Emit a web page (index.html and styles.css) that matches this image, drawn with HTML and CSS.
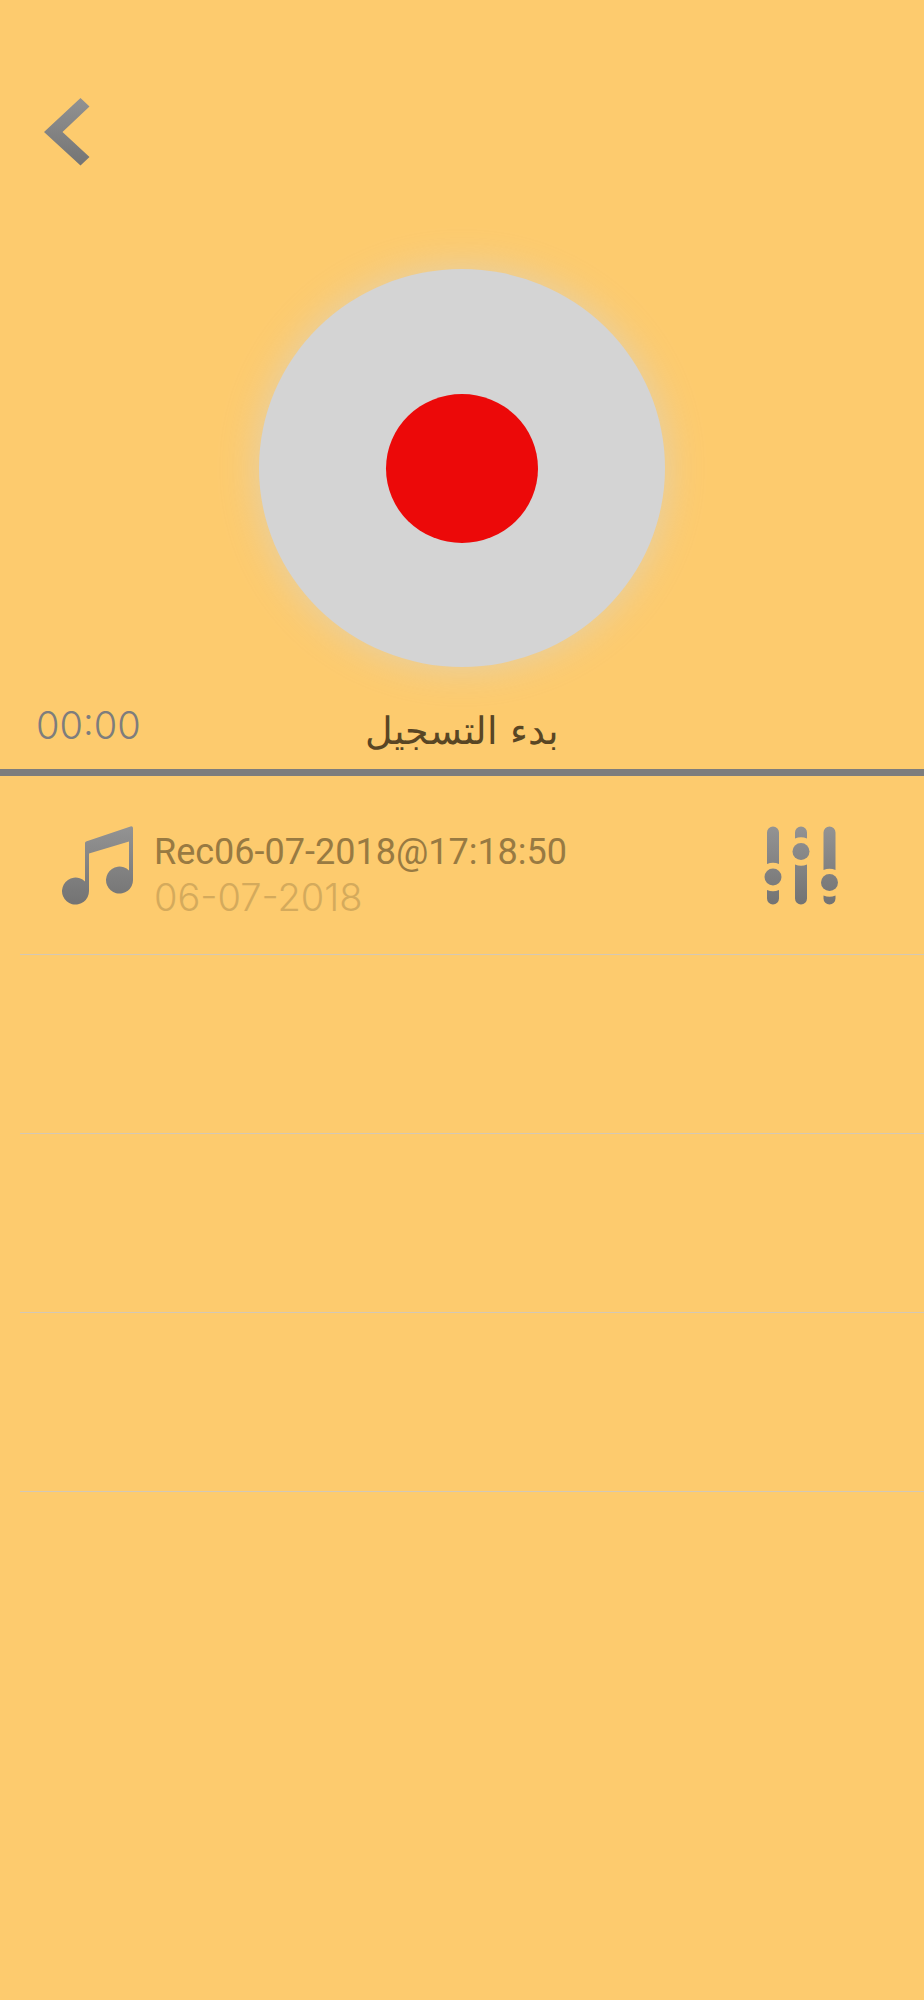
FILE: index.html
```html
<!DOCTYPE html>
<html lang="ar">
<head>
<meta charset="utf-8">
<meta name="viewport" content="width=device-width, initial-scale=1">
<title>بدء التسجيل</title>
<link rel="stylesheet" href="styles.css">
</head>
<body>
<main class="recorder">
  <nav class="nav">
    <button class="icon-button" type="button" aria-label="رجوع">
      <svg class="icon-back" viewBox="0 0 46 68" aria-hidden="true">
        <defs>
          <linearGradient id="steel-back" x1="0" y1="0" x2="0" y2="1">
            <stop offset="0" stop-color="#929292"/>
            <stop offset="1" stop-color="#747474"/>
          </linearGradient>
        </defs>
        <path fill="url(#steel-back)" d="M36.5 0 45.500 8.500 18.500 34 45.500 59 36.500 67.500 0 34Z"/>
      </svg>
    </button>
  </nav>

  <section class="record">
    <button class="record-button" type="button" aria-labelledby="record-label"><span class="record-dot"></span></button>
    <div class="record-status">
      <time class="timer">00:00</time>
      <span class="record-label" id="record-label" dir="rtl">بدء التسجيل</span>
    </div>
  </section>

  <ul class="recordings">
    <li class="recording">
      <svg class="icon-note" viewBox="0 0 71 79" aria-hidden="true">
        <defs>
          <linearGradient id="steel-note" gradientUnits="userSpaceOnUse" x1="0" y1="0" x2="0" y2="79">
            <stop offset="0" stop-color="#939393"/>
            <stop offset="1" stop-color="#737373"/>
          </linearGradient>
        </defs>
        <path fill="url(#steel-note)" d="M24 15.500 68.500.4Q71 0 71 2V54A13.500 13.500 0 1 1 67 44.500V15.500L27 27.500V65A13.500 13.500 0 1 1 23 55.500V17Q23 16 24 15.500Z"/>
      </svg>
      <div class="recording-text">
        <span class="recording-name">Rec06-07-2018@17:18:50</span>
        <time class="recording-date" datetime="2018-07-06">06-07-2018</time>
      </div>
      <button class="icon-button" type="button" aria-label="إعدادات">
        <svg class="icon-mixer" viewBox="0 0 74 79" aria-hidden="true">
          <defs>
            <linearGradient id="steel-mixer" gradientUnits="userSpaceOnUse" x1="0" y1="0" x2="0" y2="79">
              <stop offset="0" stop-color="#939393"/>
              <stop offset="1" stop-color="#737373"/>
            </linearGradient>
          </defs>
          <g fill="url(#steel-mixer)">
            <path d="M3 6.500a6 6 0 0 1 12 0V38q-6-2.500-12 0Z"/>
            <path d="M3 64q6 2.500 12 0v8.500a6 6 0 0 1-12 0Z"/>
            <circle cx="9" cy="51" r="8.500"/>
            <path d="M31 6.500a6 6 0 0 1 12 0V12.500q-6-2.500-12 0Z"/>
            <path d="M31 38.500q6 2.500 12 0v34a6 6 0 0 1-12 0Z"/>
            <circle cx="37" cy="25.500" r="8.500"/>
            <path d="M59.500 6.500a6 6 0 0 1 12 0V44q-6-2.500-12 0Z"/>
            <path d="M59.500 69.500q6 2.500 12 0v3a6 6 0 0 1-12 0Z"/>
            <circle cx="65.500" cy="56.500" r="8.500"/>
          </g>
        </svg>
      </button>
    </li>
    <li class="recording"></li>
    <li class="recording"></li>
    <li class="recording"></li>
  </ul>
</main>
</body>
</html>
```
FILE: styles.css
```css
* {
  box-sizing: border-box;
}

body {
  margin: 0;
  background: #fdcb6e;
  font-family: Inter, "DejaVu Sans", sans-serif;
}

.recorder {
  min-height: 100vh;
}

.nav {
  display: flex;
  padding: 98px 44px 0;
}

.icon-button {
  display: block;
  padding: 0;
  border: 0;
  background: none;
}

.icon-button svg,
.icon-note {
  display: block;
}

.icon-back {
  width: 46px;
  height: 68px;
}

.record {
  display: flex;
  flex-direction: column;
  align-items: center;
  padding-top: 103px;
  border-bottom: 7px solid #7d7d7d;
}

.record-button {
  display: flex;
  align-items: center;
  justify-content: center;
  width: 406px;
  height: 398px;
  padding: 0;
  border: 0;
  border-radius: 50%;
  background: #d4d4d4;
  box-shadow: 0 0 40px #d4d4d4a0;
}

.record-dot {
  width: 152px;
  height: 149px;
  border-radius: 50%;
  background: #ec0909;
}

.record-status {
  display: grid;
  grid-template-columns: 1fr auto 1fr;
  width: 100%;
  height: 102px;
  padding: 32px 36px 0;
}

.timer {
  color: #7d7d7d;
  font-size: 38px;
  font-weight: 300;
  line-height: 52px;
}

.record-label {
  color: #594624;
  font-family: "DejaVu Sans", sans-serif;
  font-size: 38px;
  font-weight: 200;
  line-height: 64px;
}

.recordings {
  margin: 0;
  padding: 0 0 0 20px;
  list-style: none;
}

.recording {
  display: flex;
  align-items: flex-start;
  height: 179px;
  padding: 50px 86px 0 42px;
  border-bottom: 1px solid #d4c8b4;
}

.icon-note {
  width: 71px;
  height: 79px;
}

.recording-text {
  display: flex;
  flex: 1;
  flex-direction: column;
  padding: 4px 0 0 21px;
}

.recording-name {
  color: #987a42;
  font-family: Roboto, sans-serif;
  font-size: 36px;
  line-height: 45px;
}

.recording-date {
  color: #d4aa5c;
  font-size: 38px;
  font-weight: 300;
  line-height: 45px;
}

.icon-mixer {
  width: 74px;
  height: 79px;
}
```
